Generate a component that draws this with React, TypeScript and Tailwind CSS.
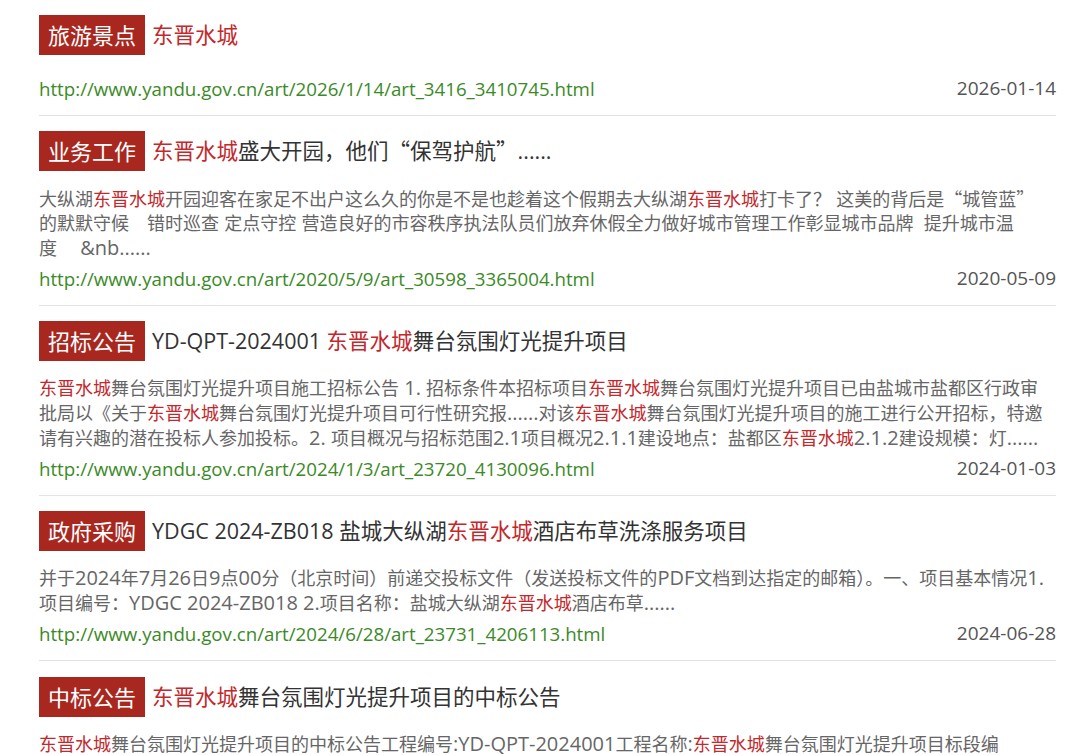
import React from "react";

const KEY = "东晋水城";

function Runs({ text, latin }: { text: string; latin: boolean }) {
  // CJK quotes use the CJK font; in body text, ASCII runs are slightly larger
  const parts = text.split(/([“”]|[\x20-\x7e]+)/).filter((p) => p !== "");
  return (
    <>
      {parts.map((p, i) => {
        if (p === "“" || p === "”")
          return (
            <span key={i} style={{ fontFamily: '"Noto Sans CJK SC", sans-serif' }}>
              {p}
            </span>
          );
        if (latin && /^[\x20-\x7e]+$/.test(p))
          return (
            <span key={i} className="text-[20px] leading-none">
              {p}
            </span>
          );
        return <React.Fragment key={i}>{p}</React.Fragment>;
      })}
    </>
  );
}

function HL({ text, latin = false }: { text: string; latin?: boolean }) {
  const parts = text.split(KEY);
  return (
    <>
      {parts.map((p, i) => (
        <React.Fragment key={i}>
          <Runs text={p} latin={latin} />
          {i < parts.length - 1 && <span className="text-[#c3282c]">{KEY}</span>}
        </React.Fragment>
      ))}
    </>
  );
}

type Item = {
  tag: string;
  title: string;
  lines: string[];
  url: string;
  date: string;
  last?: boolean;
};

const items: Item[] = [
  {
    tag: "旅游景点",
    title: "东晋水城",
    lines: [],
    url: "http://www.yandu.gov.cn/art/2026/1/14/art_3416_3410745.html",
    date: "2026-01-14",
  },
  {
    tag: "业务工作",
    title: "东晋水城盛大开园，他们“保驾护航”......",
    lines: [
      "大纵湖东晋水城开园迎客在家足不出户这么久的你是不是也趁着这个假期去大纵湖东晋水城打卡了？ 这美的背后是“城管蓝”",
      "的默默守候\u3000错时巡查 定点守控 营造良好的市容秩序执法队员们放弃休假全力做好城市管理工作彰显城市品牌  提升城市温",
      "度\u3000 &nb......",
    ],
    url: "http://www.yandu.gov.cn/art/2020/5/9/art_30598_3365004.html",
    date: "2020-05-09",
  },
  {
    tag: "招标公告",
    title: "YD-QPT-2024001 东晋水城舞台氛围灯光提升项目",
    lines: [
      "东晋水城舞台氛围灯光提升项目施工招标公告 1. 招标条件本招标项目东晋水城舞台氛围灯光提升项目已由盐城市盐都区行政审",
      "批局以《关于东晋水城舞台氛围灯光提升项目可行性研究报......对该东晋水城舞台氛围灯光提升项目的施工进行公开招标，特邀",
      "请有兴趣的潜在投标人参加投标。2. 项目概况与招标范围2.1项目概况2.1.1建设地点：盐都区东晋水城2.1.2建设规模：灯......",
    ],
    url: "http://www.yandu.gov.cn/art/2024/1/3/art_23720_4130096.html",
    date: "2024-01-03",
  },
  {
    tag: "政府采购",
    title: "YDGC 2024-ZB018 盐城大纵湖东晋水城酒店布草洗涤服务项目",
    lines: [
      "并于2024年7月26日9点00分（北京时间）前递交投标文件（发送投标文件的PDF文档到达指定的邮箱）。一、项目基本情况1.",
      "项目编号：YDGC 2024-ZB018 2.项目名称：盐城大纵湖东晋水城酒店布草......",
    ],
    url: "http://www.yandu.gov.cn/art/2024/6/28/art_23731_4206113.html",
    date: "2024-06-28",
  },
  {
    tag: "中标公告",
    title: "东晋水城舞台氛围灯光提升项目的中标公告",
    lines: [
      "东晋水城舞台氛围灯光提升项目的中标公告工程编号:YD-QPT-2024001工程名称:东晋水城舞台氛围灯光提升项目标段编",
    ],
    url: "",
    date: "",
    last: true,
  },
];

export default function App() {
  return (
    <div
      className="w-[1080px] h-[755px] overflow-hidden bg-white"
      style={{ fontFamily: '"Open Sans", "Noto Sans CJK SC", sans-serif' }}
    >
      <div className="ml-[39px] w-[1017px]">
        {items.map((it, idx) => (
          <div
            key={idx}
            className={
              it.last
                ? "pt-[16px]"
                : "pt-[15px] pb-[14px] border-b border-[#e3e3e3]"
            }
          >
            <div className="flex items-center h-[40px]">
              <span className="h-[40px] flex items-center px-[9px] bg-[#a8281f] text-white text-[22px] leading-none">
                {it.tag}
              </span>
              <span className="ml-[7px] text-[21.5px] text-[#333] whitespace-nowrap">
                <HL text={it.title} />
              </span>
            </div>
            {it.lines.length > 0 ? (
              <div className="mt-[15px] text-[18px] leading-[25px] text-[#666]">
                {it.lines.map((l, i) => (
                  <div key={i} className="whitespace-pre h-[25px]">
                    <HL text={l} latin />
                  </div>
                ))}
              </div>
            ) : (
              <div className="h-[16px]" />
            )}
            {it.url && (
              <div className="mt-[5px] flex justify-between items-center leading-[25px]">
                <span className="text-[18.7px] text-[#3b8a27]">{it.url}</span>
                <span className="text-[19px] text-[#555]">{it.date}</span>
              </div>
            )}
          </div>
        ))}
      </div>
    </div>
  );
}
